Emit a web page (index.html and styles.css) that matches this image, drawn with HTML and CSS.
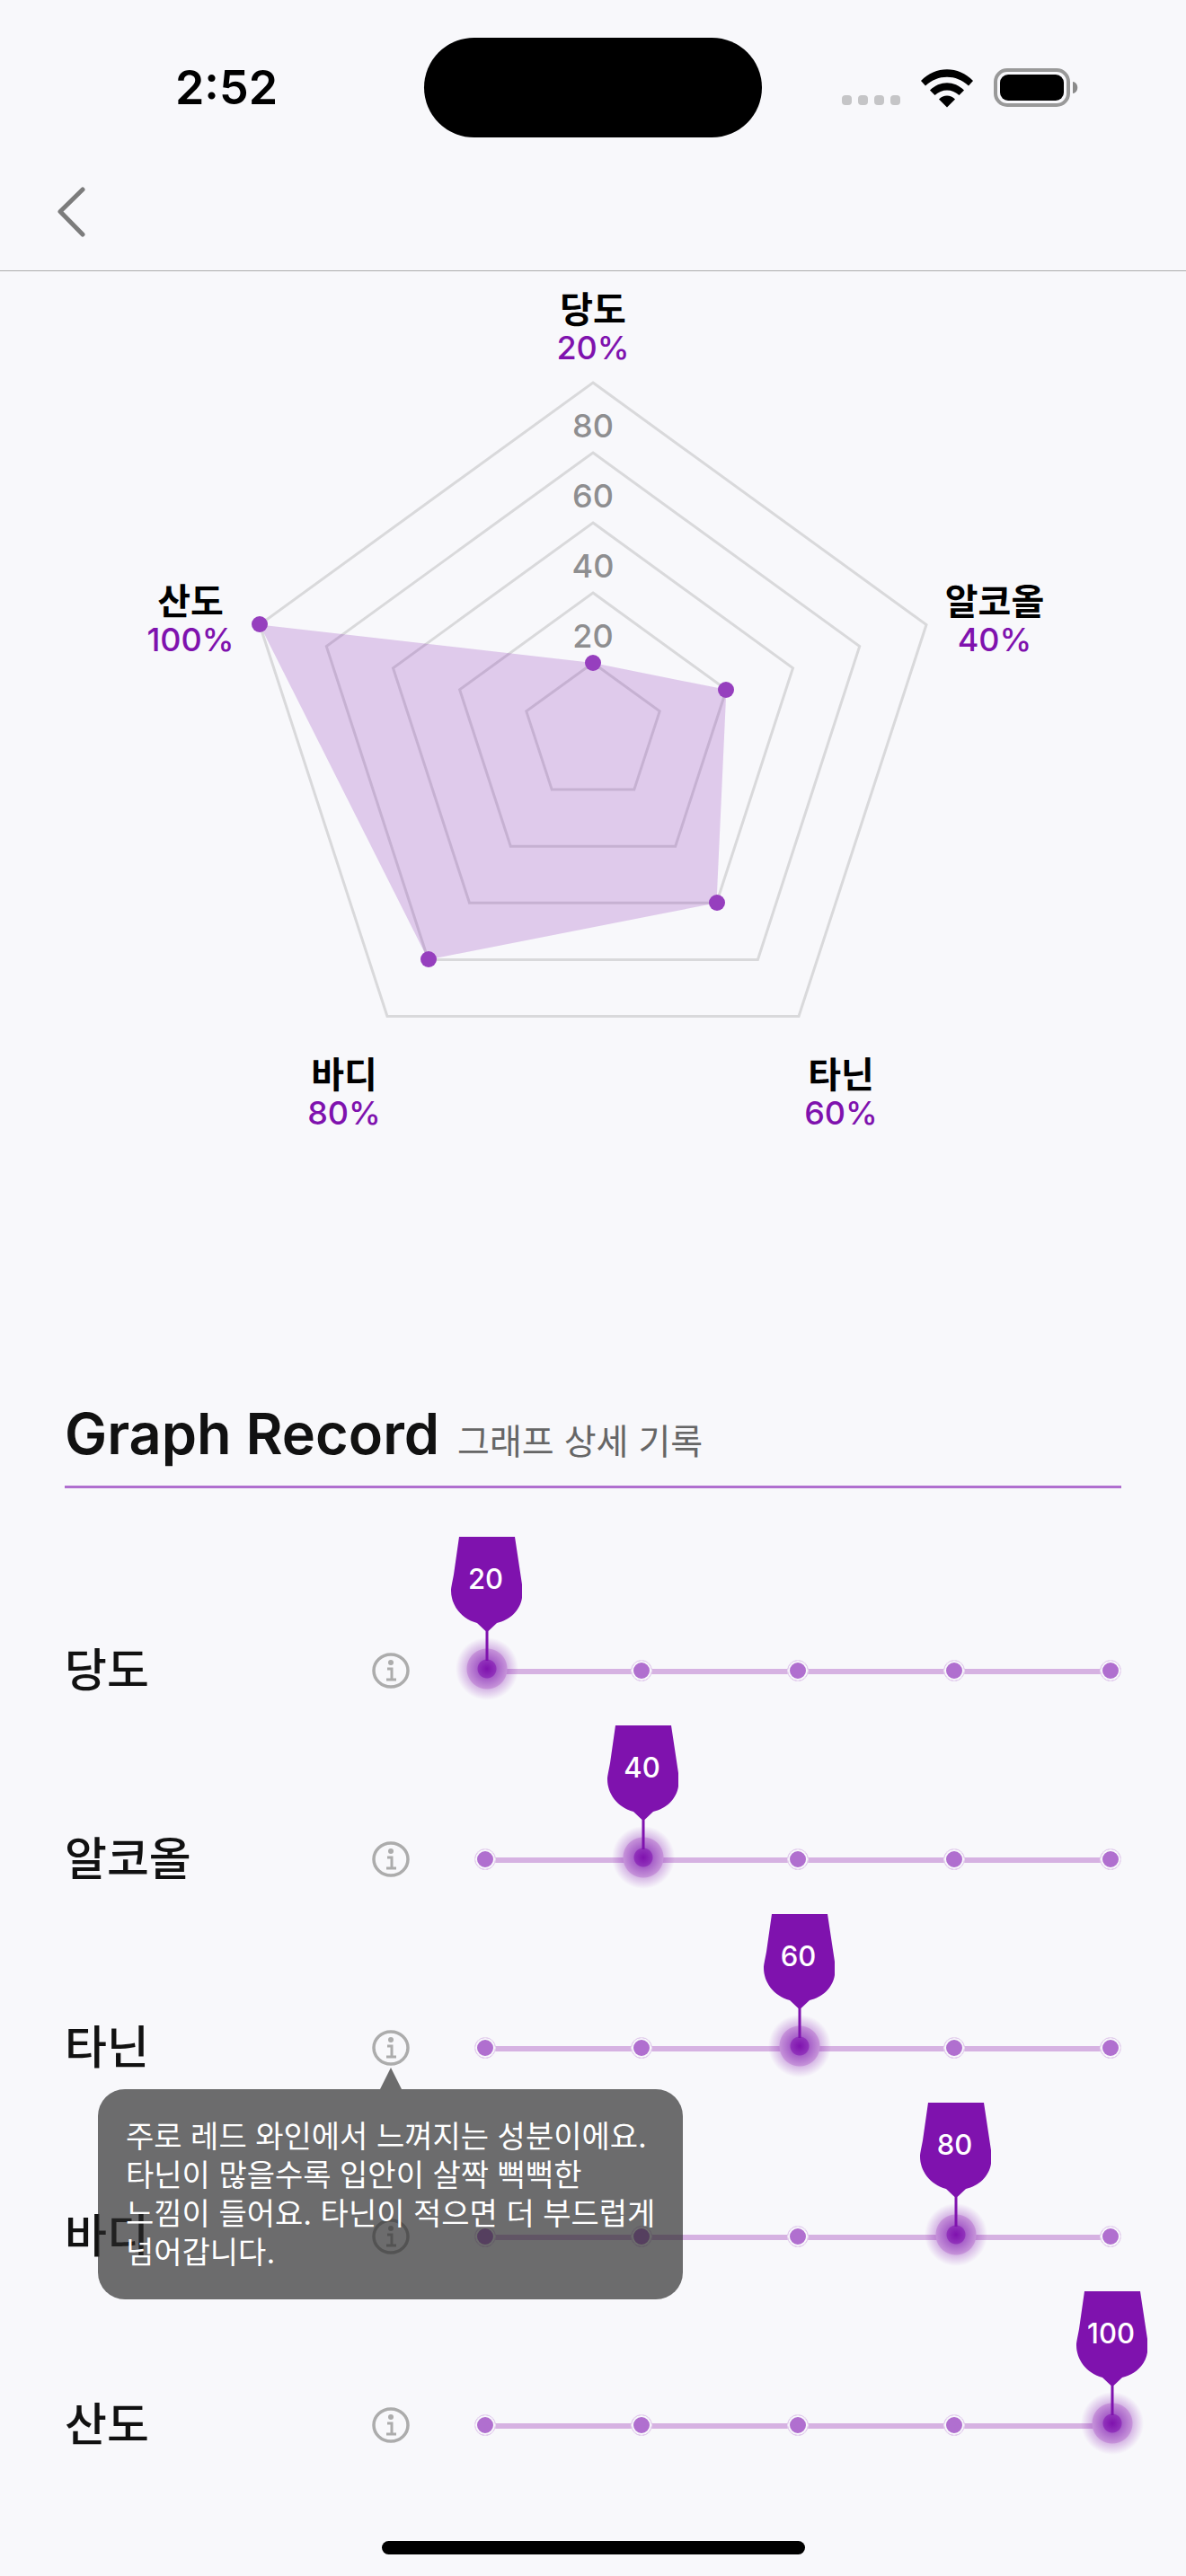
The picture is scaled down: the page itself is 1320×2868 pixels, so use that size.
FILE: index.html
```html
<!DOCTYPE html>
<html lang="ko">
<head>
<meta charset="utf-8">
<meta name="viewport" content="width=device-width, initial-scale=1">
<title>Graph Record</title>
<link rel="stylesheet" href="styles.css">
</head>
<body>
<svg width="0" height="0" class="defs" aria-hidden="true">
  <symbol id="info" viewBox="0 0 42 40">
    <ellipse cx="21" cy="20" rx="19" ry="18" fill="none" stroke="currentColor" stroke-width="3.500"/>
    <circle cx="21" cy="11" r="3" fill="currentColor"/>
    <path d="M17 18h5v11M16 30h11" fill="none" stroke="currentColor" stroke-width="3"/>
  </symbol>
  <symbol id="glass" viewBox="0 0 80 138">
    <path d="M9 0H71L79 53V68C77 82 65 93 51 96L41.500 105V138H38.500V105L29 96C11 91 0 76 0 60C0 56 2 48 3 42Z" fill="currentColor"/>
  </symbol>
</svg>
<header class="status">
  <time class="clock">2:52</time>
  <div class="island"></div>
  <div class="indicators">
    <div class="signal"><i></i><i></i><i></i><i></i></div>
    <svg class="wifi" viewBox="0 0 58 43" aria-hidden="true">
      <path d="M0 13C16-4 42-4 58 13L53 18.500C39 5.500 19 5.500 5 18.500ZM10 23.500C21 12.500 37 12.500 48 23.500L42.500 29C35 21.500 23 21.500 15.500 29ZM20 33.500C25 28 33 28 38 33.500L29 42.500Z"/>
    </svg>
    <svg class="battery" viewBox="0 0 94 44" aria-hidden="true">
      <rect x="2" y="2" width="81" height="39" rx="13" fill="none" stroke="#999" stroke-width="4"/>
      <rect x="7" y="7" width="71" height="29" rx="9"/>
      <path d="M88 15C95 16 95 27 88 28Z" fill="#8a8a8a"/>
    </svg>
  </div>
</header>
<nav class="nav">
  <button class="back" type="button" aria-label="뒤로">
    <svg viewBox="0 0 32 58" aria-hidden="true"><path d="M28 4L3 28.500L28 54"/></svg>
  </button>
</nav>
<main>
  <svg class="radar" viewBox="0 0 1320 1000" role="img" aria-label="와인 맛 그래프">
    <g class="grid">
      <path d="M660 124L1031 393.500L889 829.500H431L289 393.500Z"/>
      <path d="M660 202L956.700 417.600L843.400 766.400H476.600L363.300 417.600Z"/>
      <path d="M660 280L882.500 441.700L797.500 703.300H522.500L437.500 441.700Z"/>
      <path d="M660 358L808.400 465.800L751.700 640.200H568.300L511.600 465.800Z"/>
      <path d="M660 436L734.200 489.900L705.800 577.100H614.200L585.800 489.900Z"/>
    </g>
    <path class="area" d="M660 436L808.400 465.800L797.500 703.300L476.600 766.400L289 393.500Z"/>
    <g class="points">
      <circle cx="660" cy="436" r="9"/><circle cx="808" cy="466" r="9"/><circle cx="798" cy="703" r="9"/><circle cx="477" cy="766" r="9"/><circle cx="289" cy="393" r="9"/>
    </g>
    <g class="ticks">
      <text x="660" y="185">80</text><text x="660" y="263">60</text><text x="660" y="341">40</text><text x="660" y="419">20</text>
    </g>
    <g class="names">
      <text x="660" y="57">당도</text><text x="1107" y="382">알코올</text><text x="936" y="909">타닌</text><text x="383" y="909">바디</text><text x="212" y="382">산도</text>
    </g>
    <g class="values">
      <text x="660" y="98">20%</text><text x="1107" y="423">40%</text><text x="936" y="950">60%</text><text x="383" y="950">80%</text><text x="212" y="423">100%</text>
    </g>
  </svg>
  <section class="record">
    <header class="heading">
      <h1>Graph Record</h1>
      <p>그래프 상세 기록</p>
    </header>
    <div class="row">
      <label for="sweet">당도</label>
      <div class="help"><button type="button" aria-label="당도 설명"><svg aria-hidden="true"><use href="#info"/></svg></button></div>
      <div class="scale">
        <i class="on"></i><i></i><i></i><i></i><i></i>
        <input id="sweet" type="range" min="20" max="100" step="20" value="20">
        <div class="rail"><output for="sweet" style="left:0%"><svg aria-hidden="true"><use href="#glass"/></svg><b>20</b></output></div>
      </div>
    </div>
    <div class="row">
      <label for="alcohol">알코올</label>
      <div class="help"><button type="button" aria-label="알코올 설명"><svg aria-hidden="true"><use href="#info"/></svg></button></div>
      <div class="scale">
        <i></i><i class="on"></i><i></i><i></i><i></i>
        <input id="alcohol" type="range" min="20" max="100" step="20" value="40">
        <div class="rail"><output for="alcohol" style="left:25%"><svg aria-hidden="true"><use href="#glass"/></svg><b>40</b></output></div>
      </div>
    </div>
    <div class="row">
      <label for="tannin">타닌</label>
      <div class="help">
        <button type="button" aria-label="타닌 설명" aria-describedby="tannin-tip"><svg aria-hidden="true"><use href="#info"/></svg></button>
        <div class="tip" id="tannin-tip" role="tooltip">주로 레드 와인에서 느껴지는 성분이에요.<br>타닌이 많을수록 입안이 살짝 뻑뻑한<br>느낌이 들어요. 타닌이 적으면 더 부드럽게<br>넘어갑니다.</div>
      </div>
      <div class="scale">
        <i></i><i></i><i class="on"></i><i></i><i></i>
        <input id="tannin" type="range" min="20" max="100" step="20" value="60">
        <div class="rail"><output for="tannin" style="left:50%"><svg aria-hidden="true"><use href="#glass"/></svg><b>60</b></output></div>
      </div>
    </div>
    <div class="row">
      <label for="body">바디</label>
      <div class="help"><button type="button" aria-label="바디 설명"><svg aria-hidden="true"><use href="#info"/></svg></button></div>
      <div class="scale">
        <i></i><i></i><i></i><i class="on"></i><i></i>
        <input id="body" type="range" min="20" max="100" step="20" value="80">
        <div class="rail"><output for="body" style="left:75%"><svg aria-hidden="true"><use href="#glass"/></svg><b>80</b></output></div>
      </div>
    </div>
    <div class="row">
      <label for="acid">산도</label>
      <div class="help"><button type="button" aria-label="산도 설명"><svg aria-hidden="true"><use href="#info"/></svg></button></div>
      <div class="scale">
        <i></i><i></i><i></i><i></i><i class="on"></i>
        <input id="acid" type="range" min="20" max="100" step="20" value="100">
        <div class="rail"><output for="acid" style="left:100%"><svg aria-hidden="true"><use href="#glass"/></svg><b>100</b></output></div>
      </div>
    </div>
  </section>
</main>
<div class="home"></div>
</body>
</html>
```

FILE: styles.css
```css
* { box-sizing: border-box; }

body {
  margin: 0;
  background: #f8f8fb;
  color: #111;
  font-family: Inter, "Noto Sans CJK KR", sans-serif;
  overflow-x: hidden;
}

button { padding: 0; border: 0; background: none; }
svg { display: block; }
.defs { position: absolute; }

/* Status bar */
.status {
  display: grid;
  grid-template-columns: 1fr auto 1fr;
  align-items: center;
  padding: 42px 32px 24px;
  color: #000;
}
.clock { justify-self: center; font-size: 52px; line-height: 60px; font-weight: 600; }
.island { width: 376px; height: 111px; border-radius: 56px; background: #000; }
.indicators { display: flex; justify-self: center; align-items: flex-end; gap: 23px; }
.signal { display: flex; gap: 7px; padding-bottom: 3px; }
.signal i { width: 11px; height: 11px; border-radius: 4px; background: #c5c5c7; }
.wifi { width: 58px; height: 43px; }
.battery { width: 94px; height: 44px; }

/* Navigation bar */
.nav { padding: 30px 64px 36px; border-bottom: 1px solid #acacac; }
.back { display: block; }
.back svg { width: 32px; height: 58px; fill: none; stroke: #7c7c7c; stroke-width: 5; stroke-linecap: round; stroke-linejoin: round; }

/* Radar chart */
.radar { width: 100%; height: auto; text-anchor: middle; font-size: 36px; font-weight: 500; }
.grid { fill: none; stroke: #d9d9db; stroke-width: 3; }
.area { fill: #7f12ae; fill-opacity: 0.2; }
.points { fill: #963fbe; }
.ticks { fill: #8e8e90; }
.names { fill: #000; font-size: 40px; font-weight: 600; }
.values { fill: #7f12ae; }

/* Record */
.record { padding: 254px 72px 0; }
.heading {
  display: flex;
  align-items: baseline;
  gap: 20px;
  margin-bottom: 98px;
  padding-bottom: 18px;
  border-bottom: 3px solid #b06fcf;
}
.heading h1 { margin: 0; font-size: 63px; line-height: 80px; font-weight: 600; }
.heading p { margin: 0; font-size: 39px; line-height: 48px; color: #666; }

.row {
  display: grid;
  grid-template-columns: 342px 42px 1fr;
  align-items: center;
  height: 210px;
}
.row label { font-size: 51px; line-height: 60px; font-weight: 500; }
.help { position: relative; color: #acacac; }
.help button { display: block; color: inherit; }
.help svg { width: 42px; height: 40px; }

.tip {
  position: absolute;
  z-index: 2;
  top: 66px;
  left: -305px;
  width: 651px;
  padding: 31px;
  border-radius: 30px;
  background: rgba(42, 42, 42, 0.68);
  color: #fff;
  font-size: 34px;
  line-height: 43px;
  white-space: nowrap;
}
.tip::before {
  content: "";
  position: absolute;
  bottom: 100%;
  left: 314px;
  border: 12px solid transparent;
  border-top: 0;
  border-bottom: 24px solid rgba(42, 42, 42, 0.68);
}

/* Five-step scale */
.scale {
  position: relative;
  display: flex;
  justify-content: space-between;
  height: 24px;
  margin-left: 72px;
  background: linear-gradient(#d6b2e2, #d6b2e2) 12px 10px / calc(100% - 24px) 6px no-repeat;
}
.scale i {
  width: 24px;
  height: 24px;
  border: 1px solid #ecdff3;
  border-radius: 50%;
  background: #b06fcf;
  box-shadow: inset 0 0 0 2px #f8f8fb;
}
.scale .on { visibility: hidden; }
.scale input {
  position: absolute;
  top: -26px;
  left: -22px;
  width: calc(100% + 48px);
  height: 72px;
  margin: 0;
  appearance: none;
  background: none;
}
.scale input::-webkit-slider-thumb {
  appearance: none;
  width: 72px;
  height: 72px;
  border-radius: 50%;
  background: radial-gradient(circle,
    #7f12ae 0, #9133bb 10px, #a862c9 11px, #c592d9 22px,
    rgba(127, 18, 174, 0.27) 23px, rgba(127, 18, 174, 0) 35px);
}
.rail { position: absolute; top: -137px; left: 14px; right: 10px; height: 0; pointer-events: none; }
.rail output { position: absolute; width: 80px; margin-left: -40px; color: #7f12ae; }
.rail svg { width: 80px; height: 138px; }
.rail b {
  position: absolute;
  top: 29px;
  left: 0;
  width: 77px;
  color: #fff;
  font-size: 31px;
  line-height: 36px;
  font-weight: 500;
  text-align: center;
}

.home { width: 471px; height: 15px; margin: 24px auto; border-radius: 8px; background: #000; }
```
